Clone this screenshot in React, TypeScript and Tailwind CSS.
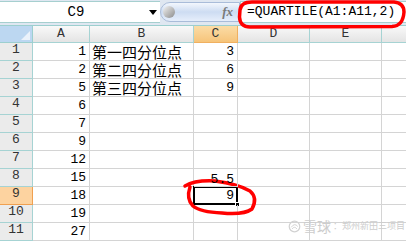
import React from 'react';

const cols = [
  { key: 'A', w: 57 },
  { key: 'B', w: 104 },
  { key: 'C', w: 44 },
  { key: 'D', w: 72 },
  { key: 'E', w: 72 },
  { key: '', w: 80 },
];

const aValues = [1, 2, 5, 6, 7, 9, 12, 15, 18, 19, 27];
const bValues = ['第一四分位点', '第二四分位点', '第三四分位点'];
const cValues: Record<number, string> = { 1: '3', 2: '6', 3: '9', 8: '5.5', 9: '9' };

const mono = { fontFamily: '"Liberation Mono", "Noto Sans CJK SC", monospace' };
const cjk = { fontFamily: '"Noto Sans CJK SC", "Liberation Sans", sans-serif' };

const App: React.FC = () => {
  return (
    <div className="relative w-[406px] h-[242px] overflow-hidden bg-white text-black">
      {/* formula bar */}
      <div className="flex h-[26px] bg-[#dfe7f1] border-b border-[#9ccfcf]">
        <div className="flex items-center h-[22px] mt-[1px] w-[160px] shrink-0 bg-white border-y border-[#a6cfcf]">
          <div className="flex-1 text-center text-[14px] pl-[6px]" style={mono}>C9</div>
          <div className="w-[14px] flex justify-center">
            <div className="w-0 h-0 border-x-[4px] border-x-transparent border-t-[5px] border-t-black" />
          </div>
        </div>
        <div className="relative flex items-center h-[20px] mt-[2px] w-[80px] shrink-0 rounded-l-full bg-gradient-to-b from-[#f3f7fd] via-[#cddcf2] to-[#e6eefb] border border-[#a9bcd9]">
          <div className="ml-[2px] w-[12px] h-[12px] rounded-full bg-gradient-to-br from-[#f4f4f4] to-[#8c8c8c]" />
          <div className="flex-1" />
          <span className="mr-[6px] text-[13px] italic font-bold text-[#7a7a7a]" style={{ fontFamily: '"Liberation Serif", serif' }}>fx</span>
        </div>
        <div className="flex-1 flex items-center h-[22px] mt-[1px] bg-white border-y border-l border-[#a6cfcf] pl-[6px] text-[13px] whitespace-nowrap" style={mono}>
          =QUARTILE(A1:A11,2)
        </div>
      </div>

      {/* column headers */}
      <div className="flex h-[17px]">
        <div className="relative w-[33px] shrink-0 bg-[#bcd7f1] border-r border-b border-[#9ccfcf]">
          <div className="absolute right-[2px] bottom-[2px] w-0 h-0 border-l-[9px] border-l-transparent border-b-[9px] border-b-[#eaf2fb]" />
        </div>
        {cols.map((c, i) => (
          <div
            key={i}
            style={{ width: c.w, ...mono }}
            className={`shrink-0 flex items-center justify-center text-[13px] border-r border-b ${
              c.key === 'C'
                ? 'bg-gradient-to-b from-[#fbdca6] to-[#f6c47a] border-[#f0b060] text-[#333]'
                : 'bg-gradient-to-b from-[#f9f9f9] to-[#e4e4e4] border-[#a6d3d3] text-[#333]'
            }`}
          >
            {c.key}
          </div>
        ))}
      </div>

      {/* rows */}
      {aValues.map((a, i) => {
        const r = i + 1;
        return (
          <div key={r} className="flex h-[18px]">
            <div
              style={mono}
              className={`w-[33px] shrink-0 flex items-end justify-center pb-[1px] text-[13px] border-r border-b ${
                r === 9 ? 'bg-[#fdd3a0] border-[#f0a050] text-[#333]' : 'bg-[#ebebeb] border-[#a6d3d3] text-[#333]'
              }`}
            >
              {r}
            </div>
            <div style={{ width: 57, ...mono }} className="shrink-0 flex items-end justify-end pr-[3px] text-[13px] leading-[16px] border-r border-b border-[#d4d4d4]">
              {a}
            </div>
            <div style={{ width: 104, ...cjk }} className="shrink-0 flex items-center pl-[2px] text-[15px] leading-[15px] border-r border-b border-[#d4d4d4] whitespace-nowrap">
              {bValues[i] ?? ''}
            </div>
            <div style={{ width: 44, ...mono }} className={`relative shrink-0 flex items-end justify-end pr-[3px] text-[13px] leading-[16px] border-r border-b border-[#d4d4d4] ${r === 8 ? 'z-10' : ''}`}>
              <span className={r === 8 ? 'translate-y-[2px]' : ''}>{cValues[r] ?? ''}</span>
              {r === 9 && (
                <>
                  <div className="absolute -left-[1px] -top-[1px] w-[45px] h-[19px] border-2 border-black" />
                  <div className="absolute -right-[3px] -bottom-[3px] w-[5px] h-[5px] bg-black border border-white" />
                </>
              )}
            </div>
            <div style={{ width: 72 }} className="shrink-0 border-r border-b border-[#d4d4d4]" />
            <div style={{ width: 72 }} className="shrink-0 border-r border-b border-[#d4d4d4]" />
            <div className="flex-1 border-b border-[#d4d4d4]" />
          </div>
        );
      })}

      {/* watermark */}
      <div className="absolute left-[288px] top-[218px] flex items-center gap-[2px] text-[#cdcdcd]" style={cjk}>
        <svg width="13" height="13" viewBox="0 0 16 16">
          <circle cx="8" cy="8" r="6.5" fill="none" stroke="#d2d2d2" strokeWidth="1.5" />
          <path d="M4 9 Q8 3 12 8 M5 11 Q8 7 11 11" fill="none" stroke="#d2d2d2" strokeWidth="1.2" />
        </svg>
        <span className="text-[14px] leading-[16px] whitespace-nowrap">雪球</span>
        <span className="text-[9px] leading-[16px] whitespace-nowrap">：郑州新田三项目</span>
      </div>

      {/* red hand-drawn marks */}
      <svg className="absolute left-0 top-0 pointer-events-none" width="406" height="242" viewBox="0 0 406 242">
        <path
          d="M 252 2 L 394 2 Q 404 3 404 12 Q 403 26 392 26.5 L 250 27 Q 240 27 239.5 17 L 240 10 Q 241 2 252 2"
          fill="none"
          stroke="#ff0000"
          strokeWidth="3.5"
          strokeLinejoin="round"
        />
        <path
          d="M 185 186 Q 195 180 215 181 Q 238 184 250 191 Q 258 198 252 209 Q 244 215 222 213 Q 200 212 193 206 Q 186 199 190 187"
          fill="none"
          stroke="#ff0000"
          strokeWidth="3.5"
          strokeLinecap="round"
          strokeLinejoin="round"
        />
      </svg>
    </div>
  );
};

export default App;
